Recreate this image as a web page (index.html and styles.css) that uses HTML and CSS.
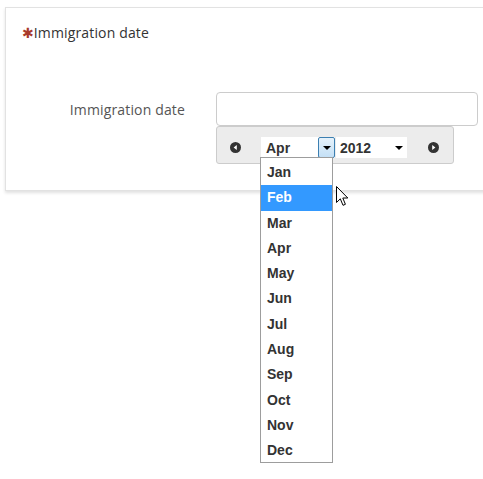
FILE: index.html
```html
<!DOCTYPE html>
<html lang="en">
<head>
  <meta charset="UTF-8" />
  <title>Immigration date</title>
  <link rel="stylesheet" href="styles.css">
</head>
<body>
  <div class="card">
    <div class="field-title"><span class="req">&#10033;</span>Immigration date</div>

    <div class="form-row">
      <label class="form-label">Immigration date</label>
      <div class="form-control">
        <input class="form-input" type="text">

        <div class="datepicker">
          <span class="dp-nav">
            <svg width="11" height="11" viewBox="0 0 11 11"><circle cx="5.5" cy="5.5" r="5.5" fill="#333"/><path d="M6.8 3 L3.6 5.5 L6.8 8 Z" fill="#fff"/></svg>
          </span>

          <div class="dp-select month open">
            <span class="dp-value">Apr</span>
            <span class="dp-arrow"><i class="tri"></i></span>
            <ul class="dp-list">
              <li>Jan</li>
              <li class="hover">Feb</li>
              <li>Mar</li>
              <li>Apr</li>
              <li>May</li>
              <li>Jun</li>
              <li>Jul</li>
              <li>Aug</li>
              <li>Sep</li>
              <li>Oct</li>
              <li>Nov</li>
              <li>Dec</li>
            </ul>
          </div>

          <div class="dp-select year">
            <span class="dp-value">2012</span>
            <span class="dp-arrow plain"><i class="tri"></i></span>
          </div>

          <span class="dp-nav next">
            <svg width="11" height="11" viewBox="0 0 11 11"><circle cx="5.5" cy="5.5" r="5.5" fill="#333"/><path d="M4.2 3 L7.4 5.5 L4.2 8 Z" fill="#fff"/></svg>
          </span>
        </div>
      </div>
    </div>
  </div>

  <!-- mouse pointer over the open month list -->
  <svg class="pointer" width="13" height="21" viewBox="0 0 13 21">
    <path d="M0.5 0.5 L0.5 16.5 L4.3 12.8 L7 19.3 L9.4 18.3 L6.8 12 L11.8 12 Z" fill="#fff" stroke="#000" stroke-width="1" stroke-linejoin="round"/>
  </svg>
</body>
</html>
```

FILE: styles.css
```css
body {
  margin: 0;
  background: #fff;
  font-family: 'Open Sans', sans-serif;
  font-size: 14px;
  color: #333;
  overflow: hidden;
  position: relative;
  height: 479px;
}
.card {
  margin: 7px 0 0 5px;
  width: 540px;
  height: 184px;
  box-sizing: border-box;
  border: 1px solid #e2e2e2;
  box-shadow: 0 2px 3px rgba(0, 0, 0, 0.12);
  padding: 15px 16px;
}
.field-title {
  height: 20px;
  line-height: 20px;
  color: #333;
  letter-spacing: 0.15px;
}
.req {
  color: #a83a2c;
  font-family: 'DejaVu Sans', sans-serif;
  font-size: 14px;
  line-height: 20px;
  letter-spacing: 0;
}
.form-row {
  display: flex;
  margin-top: 49px;
}
.form-label {
  width: 163px;
  text-align: right;
  color: #555;
  line-height: 34px;
  padding-top: 1px;
  margin-right: 31px;
  letter-spacing: 0.15px;
}
.form-control {
  display: flex;
  flex-direction: column;
}
.form-input {
  display: block;
  width: 262px;
  height: 34px;
  box-sizing: border-box;
  border: 1px solid #ccc;
  border-radius: 4px;
  margin: 0;
  padding: 6px 12px;
}
.datepicker {
  width: 238px;
  height: 38px;
  box-sizing: border-box;
  background: #ececec;
  border: 1px solid #ccc;
  border-radius: 3px;
  display: flex;
  align-items: center;
  padding: 5px 0 0 13px;
  font-family: 'Liberation Sans', Arial, sans-serif;
  font-weight: bold;
  font-size: 14px;
}
.dp-nav {
  display: flex;
  width: 11px;
  height: 11px;
  margin-right: 20px;
}
.dp-nav.next {
  margin: 0 0 0 21px;
}
.dp-select {
  position: relative;
  height: 21px;
  background: #fff;
  display: flex;
  align-items: center;
  justify-content: space-between;
}
.dp-select.month {
  width: 74px;
  margin-right: 1px;
}
.dp-select.year {
  width: 71px;
}
.dp-value {
  padding-left: 5px;
  color: #333;
}
.year .dp-value {
  padding-left: 4px;
}
.dp-arrow {
  width: 17px;
  height: 21px;
  box-sizing: border-box;
  display: flex;
  align-items: center;
  justify-content: center;
  background: linear-gradient(#e6f2fb, #c4e0f6);
  border: 1px solid #3c7fb1;
  border-radius: 2px;
}
.dp-arrow.plain {
  background: none;
  border: none;
}
.tri {
  width: 0;
  height: 0;
  border-left: 4px solid transparent;
  border-right: 4px solid transparent;
  border-top: 4px solid #000;
  margin-top: 1px;
}
.dp-list {
  position: absolute;
  top: 20px;
  left: -1px;
  width: 73px;
  height: 306px;
  box-sizing: border-box;
  margin: 0;
  padding: 2px 0 0;
  list-style: none;
  background: #fff;
  border: 1px solid #9d9d9d;
  z-index: 2;
}
.dp-list li {
  height: 25.3px;
  line-height: 25.3px;
  padding-left: 6px;
  color: #333;
}
.dp-list li.hover {
  background: #3399ff;
  color: #fff;
}
.pointer {
  position: absolute;
  left: 336px;
  top: 186px;
  z-index: 3;
}
```
